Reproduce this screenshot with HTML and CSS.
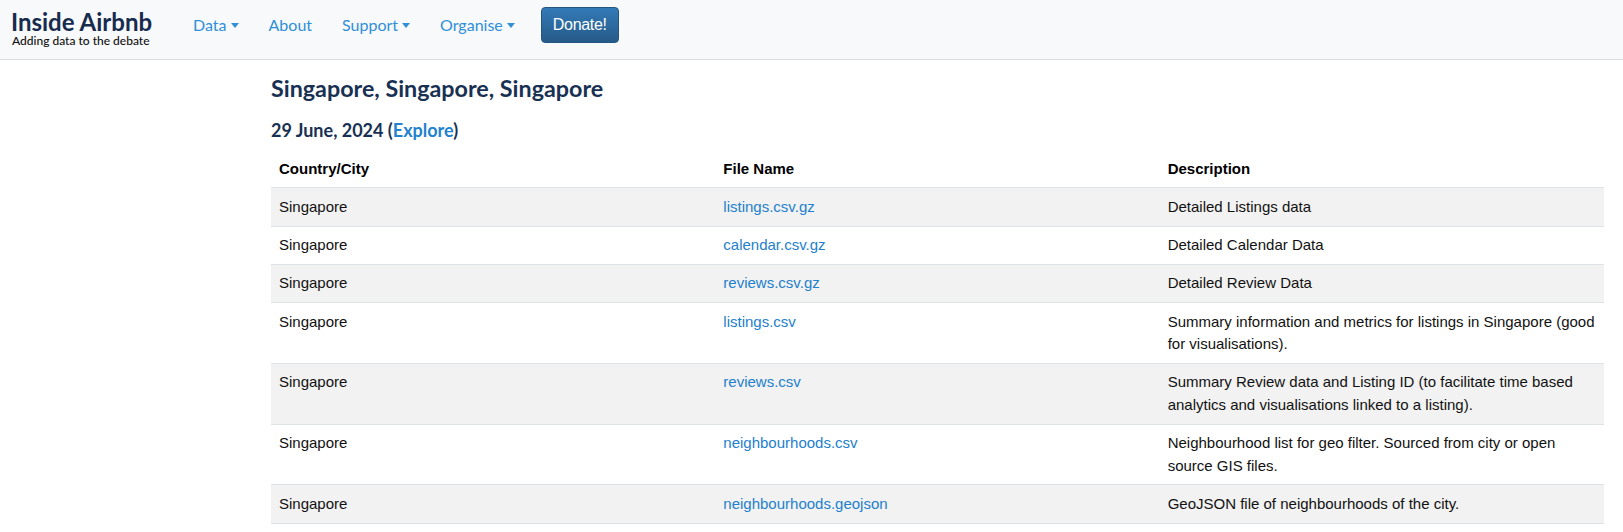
FILE: index.html
```html
<!DOCTYPE html>
<html lang="en">
<head>
<meta charset="utf-8">
<title>Inside Airbnb - Singapore</title>
<link rel="stylesheet" href="styles.css">
</head>
<body>
<header class="navbar">
  <a class="brand" href="#">
    <span class="brand-title">Inside Airbnb</span>
    <span class="brand-sub">Adding data to the debate</span>
  </a>
  <nav class="nav">
    <a class="nav-link" href="#">Data<span class="caret"></span></a>
    <a class="nav-link" href="#">About</a>
    <a class="nav-link" href="#">Support<span class="caret"></span></a>
    <a class="nav-link" href="#">Organise<span class="caret"></span></a>
    <a class="btn-donate" href="#">Donate!</a>
  </nav>
</header>
<main class="content">
  <h1 class="city-title">Singapore, Singapore, Singapore</h1>
  <h2 class="date-title">29 June, 2024 (<a href="#">Explore</a>)</h2>
  <table class="data-table">
    <colgroup><col class="col-third"><col class="col-third"><col class="col-third"></colgroup>
    <thead>
      <tr><th>Country/City</th><th>File Name</th><th>Description</th></tr>
    </thead>
    <tbody>
      <tr><td>Singapore</td><td><a href="#">listings.csv.gz</a></td><td>Detailed Listings data</td></tr>
      <tr><td>Singapore</td><td><a href="#">calendar.csv.gz</a></td><td>Detailed Calendar Data</td></tr>
      <tr><td>Singapore</td><td><a href="#">reviews.csv.gz</a></td><td>Detailed Review Data</td></tr>
      <tr><td>Singapore</td><td><a href="#">listings.csv</a></td><td>Summary information and metrics for listings in Singapore (good for visualisations).</td></tr>
      <tr><td>Singapore</td><td><a href="#">reviews.csv</a></td><td>Summary Review data and Listing ID (to facilitate time based analytics and visualisations linked to a listing).</td></tr>
      <tr><td>Singapore</td><td><a href="#">neighbourhoods.csv</a></td><td>Neighbourhood list for geo filter. Sourced from city or open source GIS files.</td></tr>
      <tr><td>Singapore</td><td><a href="#">neighbourhoods.geojson</a></td><td>GeoJSON file of neighbourhoods of the city.</td></tr>
    </tbody>
  </table>
</main>
</body>
</html>
```
FILE: styles.css
```css
* { box-sizing: border-box; }
html, body { margin: 0; padding: 0; background: #fff; }
body { font-family: "Liberation Sans", Arial, sans-serif; color: #111; }
a { text-decoration: none; }

.navbar {
  display: flex;
  align-items: flex-start;
  height: 60px;
  padding: 7px 12px 0 11px;
  background: #f8f9fa;
  border-bottom: 1px solid #dcdfe2;
}
.brand { display: flex; flex-direction: column; margin-top: 3px; color: #162b4d; }
.brand-title {
  font-family: Lato, "Liberation Sans", sans-serif;
  font-weight: 700;
  font-size: 24px;
  line-height: 24px;
}
.brand-sub {
  font-family: Lato, "Liberation Sans", sans-serif;
  font-size: 12px;
  line-height: 12px;
  margin-top: 0.5px;
  padding-left: 1px;
  color: #111;
  font-weight: 500;
}
.nav { display: flex; align-items: flex-start; gap: 30px; margin-left: 41px; }
.nav-link {
  font-family: Lato, "Liberation Sans", sans-serif;
  font-size: 16px;
  line-height: 36px;
  color: #2f8fd8;
  display: flex;
  align-items: center;
}
.caret {
  display: inline-block;
  width: 0; height: 0;
  margin-left: 4px;
  margin-top: 1px;
  border-top: 5px solid #2f8fd8;
  border-left: 4px solid transparent;
  border-right: 4px solid transparent;
}
.btn-donate {
  margin-left: -4px;
  display: inline-flex;
  align-items: center;
  justify-content: center;
  width: 78px;
  height: 36px;
  font-family: "Liberation Sans", Arial, sans-serif;
  font-size: 16px;
  letter-spacing: -0.3px;
  color: #fff;
  background: linear-gradient(to bottom, #337ab7 0, #265a88 100%);
  border: 1px solid #245580;
  border-radius: 4px;
}

.content { padding: 0 19px 0 271px; }
.city-title {
  font-family: Lato, "Liberation Sans", sans-serif;
  font-weight: 700;
  font-size: 23.3px;
  line-height: 29px;
  color: #183153;
  margin: 14px 0 0 0;
}
.date-title {
  font-family: Lato, "Liberation Sans", sans-serif;
  font-weight: 700;
  font-size: 18px;
  line-height: 22px;
  color: #183153;
  margin: 16px 0 0 0;
}
.date-title a { color: #2382ce; }

.data-table {
  width: 100%;
  margin-top: 9px;
  border-collapse: collapse;
  table-layout: fixed;
  font-size: 15px;
  line-height: 1.5;
  color: #111;
}
.col-third { width: 33.333%; }
.data-table th, .data-table td {
  padding: 7.5px 8px 7.25px;
  text-align: left;
  vertical-align: top;
  border-bottom: 1px solid #dee2e6;
}
.data-table th { font-weight: 700; color: #000; }
.data-table tbody tr:nth-child(odd) { background: #f2f2f2; }
.data-table td a { color: #2380cc; }
```
